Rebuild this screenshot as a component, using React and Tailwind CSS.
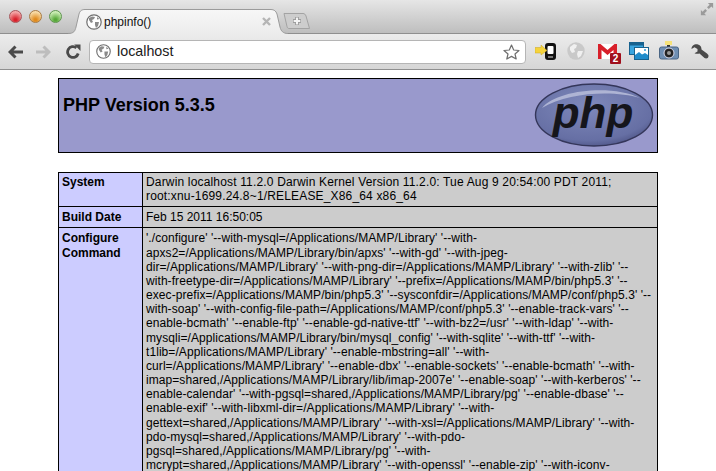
const configureLines = [
    "'./configure' '--with-mysql=/Applications/MAMP/Library' '--with-",
    "apxs2=/Applications/MAMP/Library/bin/apxs' '--with-gd' '--with-jpeg-",
    "dir=/Applications/MAMP/Library' '--with-png-dir=/Applications/MAMP/Library' '--with-zlib' '--",
    "with-freetype-dir=/Applications/MAMP/Library' '--prefix=/Applications/MAMP/bin/php5.3' '--",
    "exec-prefix=/Applications/MAMP/bin/php5.3' '--sysconfdir=/Applications/MAMP/conf/php5.3' '--",
    "with-soap' '--with-config-file-path=/Applications/MAMP/conf/php5.3' '--enable-track-vars' '--",
    "enable-bcmath' '--enable-ftp' '--enable-gd-native-ttf' '--with-bz2=/usr' '--with-ldap' '--with-",
    "mysqli=/Applications/MAMP/Library/bin/mysql_config' '--with-sqlite' '--with-ttf' '--with-",
    "t1lib=/Applications/MAMP/Library' '--enable-mbstring=all' '--with-",
    "curl=/Applications/MAMP/Library' '--enable-dbx' '--enable-sockets' '--enable-bcmath' '--with-",
    "imap=shared,/Applications/MAMP/Library/lib/imap-2007e' '--enable-soap' '--with-kerberos' '--",
    "enable-calendar' '--with-pgsql=shared,/Applications/MAMP/Library/pg' '--enable-dbase' '--",
    "enable-exif' '--with-libxml-dir=/Applications/MAMP/Library' '--with-",
    "gettext=shared,/Applications/MAMP/Library' '--with-xsl=/Applications/MAMP/Library' '--with-",
    "pdo-mysql=shared,/Applications/MAMP/Library' '--with-pdo-",
    "pgsql=shared,/Applications/MAMP/Library/pg' '--with-",
    "mcrypt=shared,/Applications/MAMP/Library' '--with-openssl' '--enable-zip' '--with-iconv-",
];

const Globe = ({ size = 16 }) => (
    <svg width={size} height={size} viewBox="0 0 16 16" className="shrink-0">
        <circle cx="8" cy="8" r="7.2" fill="#fff" stroke="#6f6f6f" strokeWidth="1.2" />
        <path d="M3 4 L6 2.5 L9 3 L8 5 L6 6 L7 8 L5 9 L3 6 Z M9 8 L13 8 L12 12 L10 14 L9 11 Z M11 3 L13.5 5 L11 5.5 Z" fill="#8a8a8a" />
    </svg>
);

const Light = ({ from, to, edge }) => (
    <div
        className="w-[13px] h-[13px] rounded-full border"
        style={{ background: `radial-gradient(circle at 50% 80%, ${to} 10%, ${from} 75%)`, borderColor: edge }}
    />
);

const Toolbar = () => (
    <div className="h-[36px] flex items-center bg-gradient-to-b from-[#ececec] to-[#d6d6d6] border-b border-[#8f8f8f]">
        <div className="w-[89px] flex items-center shrink-0">
            <svg className="ml-[8px]" width="15" height="14" viewBox="0 0 15 14">
                <path d="M7.5 1.5 L2 7 L7.5 12.5 M3 7 H15" fill="none" stroke="#4a4a4a" strokeWidth="3" />
            </svg>
            <svg className="ml-[13px]" width="15" height="14" viewBox="0 0 15 14">
                <path d="M7.5 1.5 L13 7 L7.5 12.5 M12 7 H0" fill="none" stroke="#bdbdbd" strokeWidth="3" />
            </svg>
            <svg className="ml-[14px]" width="16" height="15" viewBox="0 0 16 15">
                <path d="M13.2 9.5 A5.4 5.4 0 1 1 11.4 3.8" fill="none" stroke="#4a4a4a" strokeWidth="2.8" />
                <path d="M9.2 0.5 L15.5 0.5 L15.5 7 Z" fill="#4a4a4a" />
            </svg>
        </div>
        <div className="w-[437px] h-[24px] shrink-0 bg-white rounded-[4px] border border-[#b5b5b5] flex items-center pl-[6px] pr-[5px]">
            <Globe size={15} />
            <span className="ml-[6px] text-[14.3px] text-[#1a1a1a]">localhost</span>
            <svg className="ml-auto" width="17" height="16" viewBox="0 0 17 16">
                <path d="M8.5 1 L10.7 6 L16 6.5 L12 10 L13.2 15 L8.5 12.4 L3.8 15 L5 10 L1 6.5 L6.3 6 Z" fill="#fff" stroke="#6e6e6e" strokeWidth="1.2" strokeLinejoin="round" />
            </svg>
        </div>
        <div className="flex-1 flex items-start h-full pt-[7px]">
            {/* phone */}
            <svg className="ml-[9px] mt-[2px]" width="21" height="17" viewBox="0 0 21 17">
                <rect x="10" y="0" width="11" height="17" rx="3" fill="#111" />
                <rect x="12.5" y="3" width="6" height="8" rx="1" fill="#fff" />
                <rect x="13" y="13" width="5" height="2" fill="#777" />
                <path d="M0 4.5 H6 V2 L12 7.5 L6 12 V10 H0 Z" fill="#f5d33c" stroke="#c9a520" strokeWidth=".5" />
            </svg>
            {/* gray globe */}
            <svg className="ml-[11px] mt-[1px]" width="18" height="18" viewBox="0 0 18 18">
                <circle cx="9" cy="9" r="8.7" fill="#c9c9c9" />
                <path d="M3 5 L7 2 L10 3 L9 6 L7 7 L8 10 L5 11 L3 8 Z M11 9 L16 9 L14 14 L11 16 L10 12 Z" fill="#f0f0f0" />
            </svg>
            {/* gmail */}
            <div className="relative ml-[13px] mt-[3px] w-[23px] h-[20px]">
                <svg width="19" height="15" viewBox="0 0 19 15">
                    <path d="M0 0 H19 V15 H0 Z" fill="#fff" />
                    <path d="M0 0 H2.5 L9.5 6 L16.5 0 H19 V15 H15.5 V6 L9.5 11 L3.5 6 V15 H0 Z" fill="#d8202a" />
                </svg>
                <div className="absolute right-0 bottom-0 w-[11px] h-[11px] rounded-[1px] bg-[#a00f1c] flex items-center justify-center text-[10px] leading-none font-bold text-white">2</div>
            </div>
            {/* photos */}
            <svg className="ml-[8px] mt-[1px]" width="20" height="18" viewBox="0 0 20 18">
                <rect x="0.5" y="0.5" width="14" height="12" fill="#38a5e0" stroke="#17628f" />
                <rect x="1" y="1" width="13" height="2.5" fill="#17628f" />
                <rect x="5.5" y="5.5" width="14" height="12" fill="#fff" stroke="#17628f" />
                <path d="M6 17 V13 L10 10 L13 12.5 L16 11 L19 13 V17 Z" fill="#1f8ccb" />
                <circle cx="16" cy="8" r="1" fill="#2f9bd8" />
            </svg>
            {/* camera */}
            <svg className="ml-[10px]" width="20" height="19" viewBox="0 0 20 19">
                <rect x="6" y="0" width="7" height="4" fill="#f6e27a" />
                <rect x="8" y="4" width="3" height="2" fill="#333" />
                <rect x="0.5" y="6" width="19" height="12" rx="2" fill="#6f8fb3" stroke="#4a6584" />
                <circle cx="10" cy="12" r="5" fill="#222" stroke="#dde" />
                <circle cx="10" cy="12" r="2" fill="#999" />
            </svg>
            {/* wrench */}
            <svg className="ml-[12px] mt-[3px]" width="18" height="15" viewBox="0 0 18 15">
                <path d="M7 0.5 C3.5 -0.3 0.5 2 0.5 5 L3.5 3.2 L6.5 5 L6.5 7.5 L3.5 9.2 C5 10 7 10 8.5 9.5 L13.5 14 C15 15 17.5 14.5 17.5 12 C17.5 11 17 10.5 16 9.5 L10.5 5.5 C10.5 3 9.5 1 7 0.5 Z" fill="#4a4a4a" />
            </svg>
        </div>
    </div>
);

const TabStrip = () => (
    <div className="h-[34px] flex items-end bg-gradient-to-b from-[#e6e6e6] to-[#bdbdbd] relative">
        <div className="absolute left-0 right-0 bottom-0 border-b border-[#8f8f8f]" />
        <div className="flex gap-[7px] items-center w-[68px] h-full pl-[9px] pb-[1px] shrink-0">
            <Light from="#f4a8a8" to="#d8202a" edge="#a8555a" />
            <Light from="#f8dca8" to="#e08a1c" edge="#a87b45" />
            <Light from="#cdeeb6" to="#56a838" edge="#5f9550" />
        </div>
        <div className="relative w-[220px] h-[25px] shrink-0 flex items-center pl-[18px] pr-[17px]">
            <svg className="absolute inset-0" width="220" height="25" viewBox="0 0 220 25">
                <defs>
                    <linearGradient id="tabFill" x1="0" y1="0" x2="0" y2="1">
                        <stop offset="0" stopColor="#f7f7f7" />
                        <stop offset="1" stopColor="#ececec" />
                    </linearGradient>
                </defs>
                <path d="M0 24.5 C6 24.5 7 22 8 18 L11 5 C12 1.5 14 .5 17 .5 L203 .5 C206 .5 208 2 209 5 L212 18 C213 22 215 24.5 220 24.5 V25 H0 Z" fill="url(#tabFill)" />
                <path d="M0 24.5 C6 24.5 7 22 8 18 L11 5 C12 1.5 14 .5 17 .5 L203 .5 C206 .5 208 2 209 5 L212 18 C213 22 215 24.5 220 24.5" fill="none" stroke="#9b9b9b" />
            </svg>
            <div className="relative flex items-center w-full">
                <Globe size={16} />
                <span className="ml-[2px] text-[12px] text-[#111]">phpinfo()</span>
                <svg className="ml-auto" width="9" height="9" viewBox="0 0 9 9">
                    <path d="M1 1 L8 8 M8 1 L1 8" stroke="#b5b5b5" strokeWidth="2.4" />
                </svg>
            </div>
        </div>
        <svg className="relative -ml-[5px] mb-[5px] shrink-0" width="28" height="16" viewBox="0 0 28 16">
            <path d="M1 .5 H20 C21.5 .5 22.5 1.5 23 3 L26.5 15.5 H6 C5 15.5 4.5 15 4 13.5 Z" fill="#cdcdcd" stroke="#a3a3a3" />
            <path d="M14 4 V12 M10 8 H18" stroke="#8f8f8f" strokeWidth="3.6" />
            <path d="M14 4.6 V11.4 M10.6 8 H17.4" stroke="#f4f4f4" strokeWidth="2.2" />
        </svg>
        <svg className="absolute right-[2px] top-[2px]" width="14" height="14" viewBox="0 0 16 16">
            <path d="M9 1 H15 V7 L13 5 L10 8 L8 6 L11 3 Z M1 9 L3 11 L6 8 L8 10 L5 13 L7 15 H1 Z" fill="#9a9a9a" />
        </svg>
    </div>
);

const Row = ({ label, pad, children }) => (
    <div className="flex gap-px">
        <div className={`w-[83px] shrink-0 bg-[#ccccff] px-[3px] font-bold ${pad}`}>{label}</div>
        <div className={`flex-1 bg-[#cccccc] px-[3px] whitespace-nowrap overflow-hidden ${pad}`}>{children}</div>
    </div>
);

const App = () => {
    return (
        <div className="w-[716px] h-[471px] overflow-hidden bg-white font-['Liberation_Sans',sans-serif] text-black">
            <TabStrip />
            <Toolbar />
            <div className="w-[600px] ml-[58px] mt-[8px]">
                <div className="h-[75px] bg-[#9999cc] border border-black flex items-start justify-between pl-[4px] pr-[3px]">
                    <h1 className="text-[18px] leading-[21px] font-bold mt-[16px]">PHP Version 5.3.5</h1>
                    <svg className="mt-[3px]" width="120" height="66" viewBox="0 0 120 66">
                        <defs>
                            <radialGradient id="logoFill" cx="0.45" cy="0.35" r="0.7">
                                <stop offset="0" stopColor="#7f89bb" />
                                <stop offset="0.8" stopColor="#666fa4" />
                                <stop offset="1" stopColor="#4c5283" />
                            </radialGradient>
                        </defs>
                        <ellipse cx="60" cy="33" rx="58.5" ry="31" fill="url(#logoFill)" stroke="#34365a" strokeWidth="1.4" />
                        <path d="M8 26 C22 8 78 2 106 16 C80 8 34 10 8 26 Z" fill="#aeb4d4" />
                        <text x="59" y="46" textAnchor="middle" fontSize="44" fontWeight="700" fontStyle="italic" fill="#15151b" fontFamily="Liberation Sans, sans-serif">php</text>
                    </svg>
                </div>
                <div className="mt-[19px] border border-black bg-black flex flex-col gap-px text-[12px] leading-[14.15px]">
                    <Row label="System" pad="pt-[2px] pb-[3px]">
                        <div className="tracking-[0.165px]">Darwin localhost 11.2.0 Darwin Kernel Version 11.2.0: Tue Aug 9 20:54:00 PDT 2011;</div>
                        <div className="tracking-[0.165px]">root:xnu-1699.24.8~1/RELEASE_X86_64 x86_64</div>
                    </Row>
                    <Row label="Build Date" pad="pt-[3px] pb-[3px]">Feb 15 2011 16:50:05</Row>
                    <Row label={<>Configure<br />Command</>} pad="pt-[3px] pb-[3px]">
                        {configureLines.map((line) => (
                            <div key={line} className="tracking-[0.07px]">{line}</div>
                        ))}
                    </Row>
                </div>
            </div>
        </div>
    );
};

export default App;
